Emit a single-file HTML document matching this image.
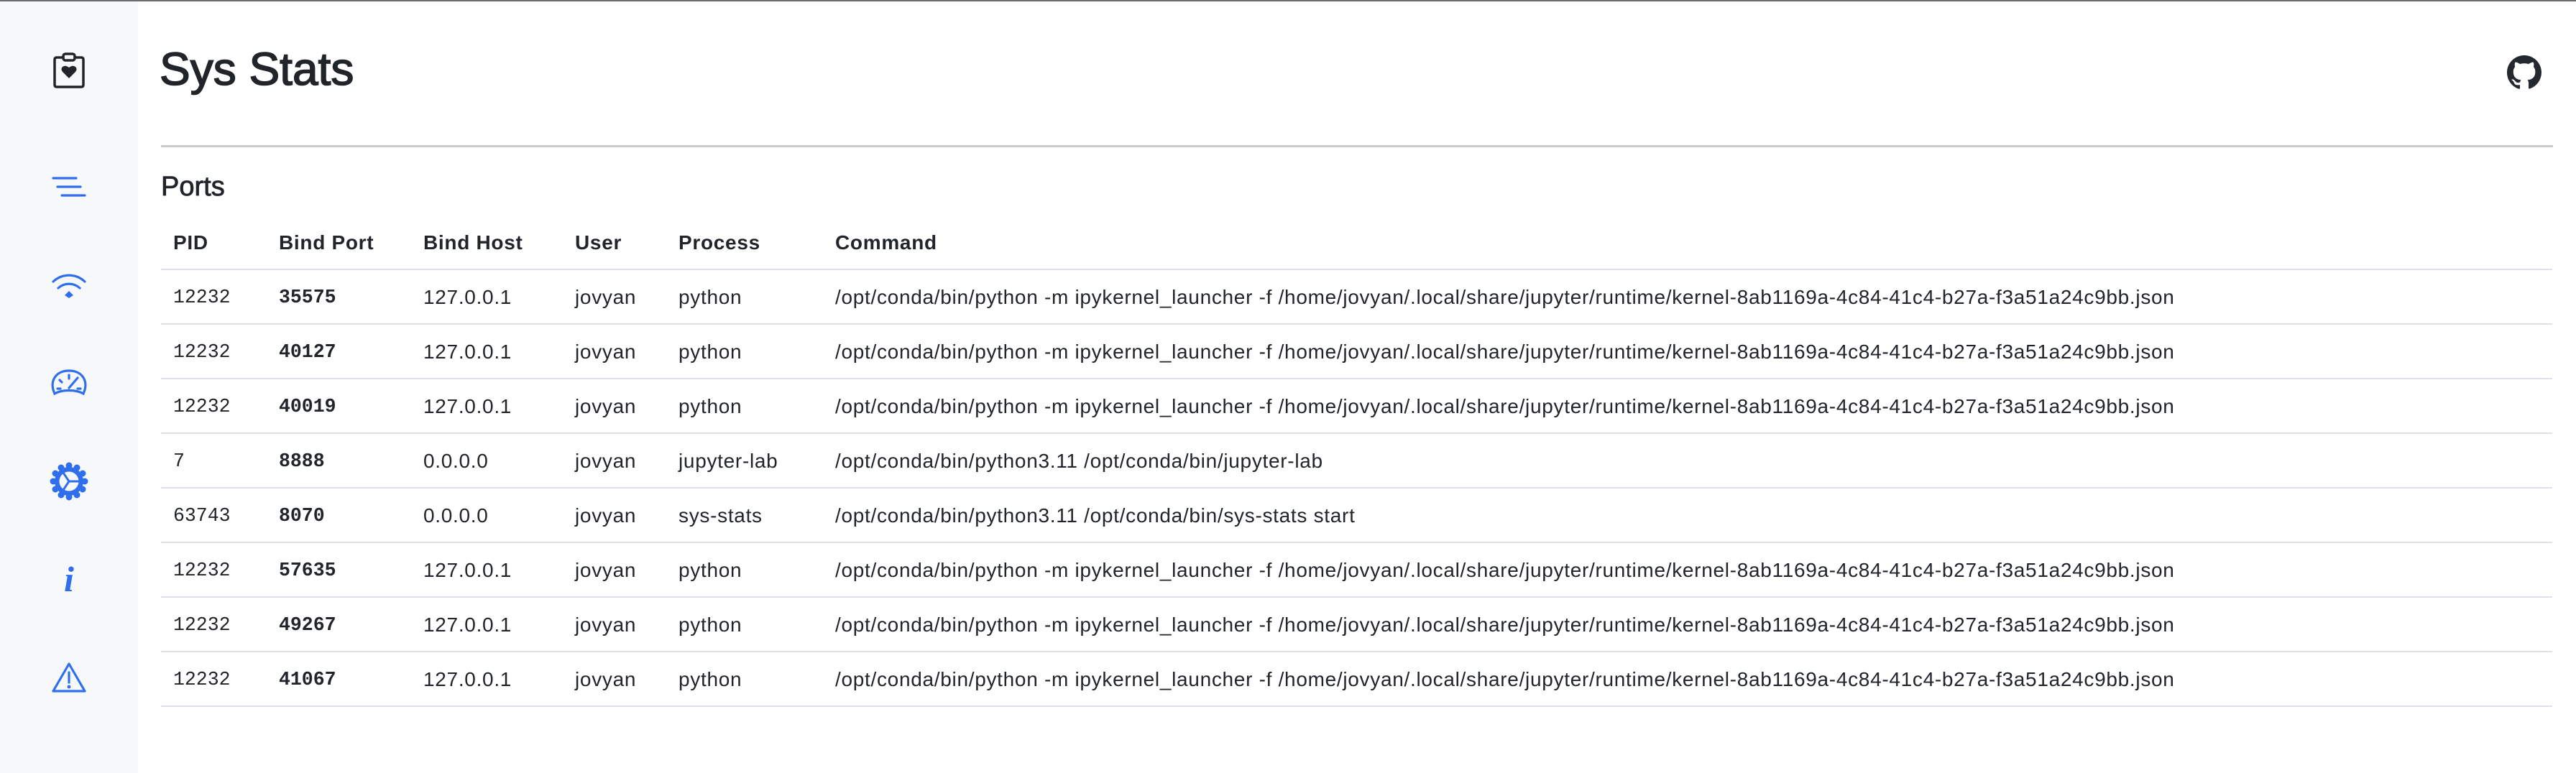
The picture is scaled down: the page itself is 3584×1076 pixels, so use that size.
<!DOCTYPE html>
<html><head><meta charset="utf-8"><style>
*{margin:0;padding:0;box-sizing:border-box}
body{width:3584px;height:1076px;background:#fff;position:relative;overflow:hidden;font-family:"Liberation Sans",Arial,sans-serif;color:#212529}
.topb{position:absolute;left:0;top:0;width:3584px;height:2px;background:#6b6b6b}
.side{position:absolute;left:0;top:2px;width:192px;height:1074px;background:#f7f8fa}
.t{position:absolute;white-space:nowrap}
.line{position:absolute;left:224px;width:3327px;height:2px;background:#dee2e6}
.row{position:absolute;left:0;height:74px;line-height:74px;font-size:28px;width:3584px}
.row span{position:absolute;top:0;white-space:nowrap;letter-spacing:0.7px}
.row span.m{letter-spacing:0}
.m{font-family:"Liberation Mono",monospace;font-size:26.5px}
.b{font-weight:bold}
</style></head><body>
<div class="topb"></div>
<div class="side"></div>
<svg style="position:absolute;left:0;top:0" width="192" height="1076" viewBox="0 0 192 1076">
<g fill="none" stroke="#212529" stroke-width="3.5" stroke-linecap="round">
<path d="M88 80 H79 Q76 80 76 83 V118 Q76 121 79 121 H113 Q116 121 116 118 V83 Q116 80 113 80 H104"/>
<rect x="88" y="75" width="16" height="9" rx="3"/>
</g>
<path d="M96 109 L87 100 Q84 96 87 93 Q91 90 96 94 Q101 90 105 93 Q108 96 105 100 Z" fill="#212529"/>
<g stroke="#2f6fed" stroke-width="3.2" stroke-linecap="round" fill="none">
<path d="M74 248 H106 M80 260 H112 M86 272 H118"/>
<path d="M74 392 A32 32 0 0 1 118 392"/>
<path d="M81 401 A22 22 0 0 1 111 401"/>
<path d="M76 548 C68 530 78 516 96 516 C114 516 124 530 116 548 C106 542 86 542 76 548 Z"/>
<path d="M96 522 V527 M83 529 L86 532 M80 541 H84 M108 541 H112 M96 540 L108 526"/>
<path d="M96 924 L118 962 H74 Z" stroke-linejoin="round"/>
<path d="M96 936 V950"/>
</g>
<path d="M90 411 L96 405 L102 411 L96 415 Z" fill="#2f6fed"/>
<circle cx="96" cy="956" r="2.4" fill="#2f6fed"/>
<g fill="#2f6fed">
<circle cx="96" cy="670" r="20"/>
<circle cx="96" cy="648" r="4.5"/><circle cx="96" cy="692" r="4.5"/>
<circle cx="74" cy="670" r="4.5"/><circle cx="118" cy="670" r="4.5"/>
<circle cx="85" cy="651" r="4.5"/><circle cx="107" cy="651" r="4.5"/>
<circle cx="85" cy="689" r="4.5"/><circle cx="107" cy="689" r="4.5"/>
<circle cx="77" cy="659" r="4.5"/><circle cx="115" cy="659" r="4.5"/>
<circle cx="77" cy="681" r="4.5"/><circle cx="115" cy="681" r="4.5"/>
</g>
<circle cx="96" cy="670" r="13.5" fill="#f7f8fa"/>
<path d="M96 670 L88 658 M96 670 L110 670 M96 670 L88 682" stroke="#2f6fed" stroke-width="3"/>
<text x="96" y="823" text-anchor="middle" font-family="Liberation Serif,serif" font-style="italic" font-weight="bold" font-size="50" fill="#2f6fed">i</text>
</svg>

<div class="t" style="left:222px;top:60px;font-size:64px;line-height:72px;-webkit-text-stroke:1.6px #212529">Sys Stats</div>
<svg style="position:absolute;left:3488px;top:77px" width="48" height="48" viewBox="0 0 16 16"><path fill="#24292f" d="M8 0C3.58 0 0 3.58 0 8c0 3.54 2.290 6.530 5.470 7.590.4.07.55-.17.55-.38 0-.19-.01-.82-.01-1.490-2.010.37-2.530-.49-2.690-.94-.09-.23-.48-.94-.82-1.130-.28-.15-.68-.52-.01-.53.63-.01 1.080.58 1.230.73.72 1.210 1.870.87 2.330.66.07-.52.28-.87.51-1.070-1.780-.2-3.640-.89-3.640-3.950 0-.87.31-1.590.82-2.150-.08-.2-.36-1.020.08-2.120 0 0 .67-.21 2.200.82.64-.18 1.320-.27 2-.27.68 0 1.360.09 2 .27 1.530-1.040 2.200-.82 2.200-.82.44 1.100.16 1.920.08 2.120.51.56.82 1.270.82 2.150 0 3.070-1.870 3.750-3.650 3.950.29.25.54.73.54 1.480 0 1.070-.01 1.930-.01 2.200 0 .21.15.46.55.38A8.013 8.013 0 0016 8c0-4.420-3.580-8-8-8z"/></svg>
<div style="position:absolute;left:224px;top:202px;width:3328px;height:3px;background:#cbcbcb"></div>
<div class="t" style="left:224px;top:238px;font-size:38px;line-height:44px;-webkit-text-stroke:0.8px #212529">Ports</div>

<div class="row b" style="top:300px;height:75px;line-height:75px"><span style="left:241px">PID</span><span style="left:388px">Bind Port</span><span style="left:589px">Bind Host</span><span style="left:800px">User</span><span style="left:944px">Process</span><span style="left:1162px">Command</span></div>
<div class="line" style="top:374px"></div>

<div class="row" style="top:377px"><span class="m" style="left:241px">12232</span><span class="m b" style="left:388px">35575</span><span style="left:589px">127.0.0.1</span><span style="left:800px">jovyan</span><span style="left:944px">python</span><span style="left:1162px">/opt/conda/bin/python -m ipykernel_launcher -f /home/jovyan/.local/share/jupyter/runtime/kernel-8ab1169a-4c84-41c4-b27a-f3a51a24c9bb.json</span></div>
<div class="line" style="top:450px"></div>
<div class="row" style="top:453px"><span class="m" style="left:241px">12232</span><span class="m b" style="left:388px">40127</span><span style="left:589px">127.0.0.1</span><span style="left:800px">jovyan</span><span style="left:944px">python</span><span style="left:1162px">/opt/conda/bin/python -m ipykernel_launcher -f /home/jovyan/.local/share/jupyter/runtime/kernel-8ab1169a-4c84-41c4-b27a-f3a51a24c9bb.json</span></div>
<div class="line" style="top:526px"></div>
<div class="row" style="top:529px"><span class="m" style="left:241px">12232</span><span class="m b" style="left:388px">40019</span><span style="left:589px">127.0.0.1</span><span style="left:800px">jovyan</span><span style="left:944px">python</span><span style="left:1162px">/opt/conda/bin/python -m ipykernel_launcher -f /home/jovyan/.local/share/jupyter/runtime/kernel-8ab1169a-4c84-41c4-b27a-f3a51a24c9bb.json</span></div>
<div class="line" style="top:602px"></div>
<div class="row" style="top:605px"><span class="m" style="left:241px">7</span><span class="m b" style="left:388px">8888</span><span style="left:589px">0.0.0.0</span><span style="left:800px">jovyan</span><span style="left:944px">jupyter-lab</span><span style="left:1162px">/opt/conda/bin/python3.11 /opt/conda/bin/jupyter-lab</span></div>
<div class="line" style="top:678px"></div>
<div class="row" style="top:681px"><span class="m" style="left:241px">63743</span><span class="m b" style="left:388px">8070</span><span style="left:589px">0.0.0.0</span><span style="left:800px">jovyan</span><span style="left:944px">sys-stats</span><span style="left:1162px">/opt/conda/bin/python3.11 /opt/conda/bin/sys-stats start</span></div>
<div class="line" style="top:754px"></div>
<div class="row" style="top:757px"><span class="m" style="left:241px">12232</span><span class="m b" style="left:388px">57635</span><span style="left:589px">127.0.0.1</span><span style="left:800px">jovyan</span><span style="left:944px">python</span><span style="left:1162px">/opt/conda/bin/python -m ipykernel_launcher -f /home/jovyan/.local/share/jupyter/runtime/kernel-8ab1169a-4c84-41c4-b27a-f3a51a24c9bb.json</span></div>
<div class="line" style="top:830px"></div>
<div class="row" style="top:833px"><span class="m" style="left:241px">12232</span><span class="m b" style="left:388px">49267</span><span style="left:589px">127.0.0.1</span><span style="left:800px">jovyan</span><span style="left:944px">python</span><span style="left:1162px">/opt/conda/bin/python -m ipykernel_launcher -f /home/jovyan/.local/share/jupyter/runtime/kernel-8ab1169a-4c84-41c4-b27a-f3a51a24c9bb.json</span></div>
<div class="line" style="top:906px"></div>
<div class="row" style="top:909px"><span class="m" style="left:241px">12232</span><span class="m b" style="left:388px">41067</span><span style="left:589px">127.0.0.1</span><span style="left:800px">jovyan</span><span style="left:944px">python</span><span style="left:1162px">/opt/conda/bin/python -m ipykernel_launcher -f /home/jovyan/.local/share/jupyter/runtime/kernel-8ab1169a-4c84-41c4-b27a-f3a51a24c9bb.json</span></div>
<div class="line" style="top:982px"></div>
</body></html>
